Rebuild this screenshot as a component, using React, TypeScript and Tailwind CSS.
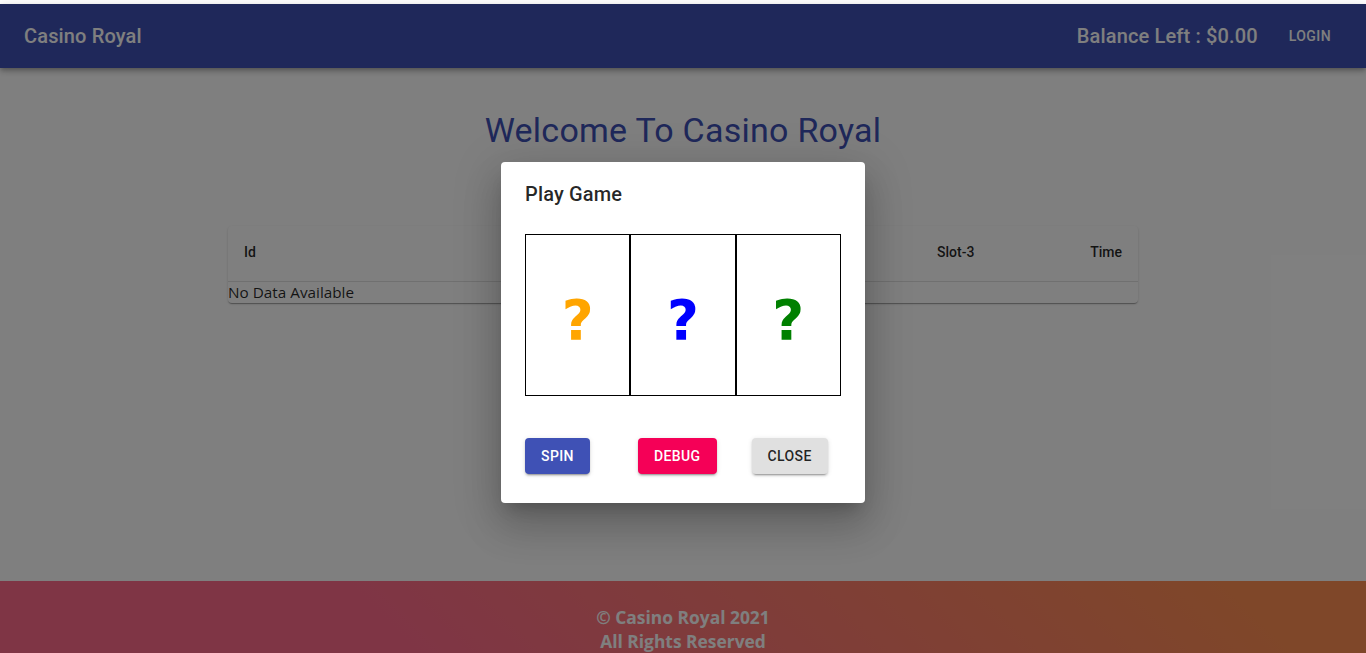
export default function App() {
  const cols = [
    { name: "Id", w: "w-[290px]" },
    { name: "Slot-1", w: "w-[201px]" },
    { name: "Slot-2", w: "w-[202px]" },
    { name: "Slot-3", w: "w-[120px]" },
  ];
  return (
    <div className="relative h-[653px] overflow-hidden bg-white font-['Roboto',sans-serif]">
      <div className="h-[4px] bg-white" />
      <header className="flex h-16 items-center bg-[#3f51b5] pl-6 pr-[27px] text-white shadow-[0_2px_4px_-1px_rgba(0,0,0,0.2),0_4px_5px_0_rgba(0,0,0,0.14),0_1px_10px_0_rgba(0,0,0,0.12)]">
        <h6 className="text-[20px] font-medium leading-8 tracking-[0.15px]">Casino Royal</h6>
        <div className="ml-auto text-[20px] font-medium leading-8 tracking-[0.15px]">Balance Left : $0.00</div>
        <button className="ml-[23px] rounded px-2 py-[6px] text-sm font-medium uppercase tracking-[0.4px]">Login</button>
      </header>

      <main className="h-[513px] pt-[41px]">
        <h4 className="text-center text-[34px] leading-[42px] tracking-[0.25px] text-[#3f51b5]">Welcome To Casino Royal</h4>
        <div className="mx-auto mt-[75px] w-[910px] rounded bg-white shadow-[0_2px_1px_-1px_rgba(0,0,0,0.2),0_1px_1px_0_rgba(0,0,0,0.14),0_1px_3px_0_rgba(0,0,0,0.12)]">
          <div className="flex h-[56px] items-center border-b border-[#e0e0e0] pb-[3px] text-sm font-medium text-black/85">
            {cols.map((c) => (
              <div key={c.name} className={`${c.w} px-4`}>
                {c.name}
              </div>
            ))}
            <div className="flex-1 px-4 text-right">Time</div>
          </div>
          <div className="font-['Open_Sans',sans-serif] text-[15.3px] leading-[21px] text-black/85">No Data Available</div>
        </div>
      </main>

      <footer className="flex h-[90px] flex-col items-center bg-[linear-gradient(45deg,#fe6b8b_30%,#ff8e53_90%)] pt-[24px] font-['Open_Sans',sans-serif] text-[17.4px] font-bold leading-6 text-white">
        <div>© Casino Royal 2021</div>
        <div>All Rights Reserved</div>
      </footer>

      <div className="absolute inset-x-0 bottom-0 top-[4px] bg-black/50" />

      <div className="absolute left-[501px] top-[162px] h-[341px] w-[364px] rounded bg-white shadow-[0_11px_15px_-7px_rgba(0,0,0,0.2),0_24px_38px_3px_rgba(0,0,0,0.14),0_9px_46px_8px_rgba(0,0,0,0.12)]">
        <h2 className="px-6 pt-4 text-[20px] font-medium leading-8 tracking-[0.15px] text-black/85">Play Game</h2>
        <div className="mx-6 mt-6 flex h-[162px] w-[316px]">
          {["text-[#ffa500]", "text-[#0000ff]", "text-[#008000]"].map((c) => (
            <div key={c} className={`flex flex-1 items-center justify-center border border-black pt-[10px] font-['DejaVu_Sans',sans-serif] text-[55px] font-bold leading-none ${c}`}>
              ?
            </div>
          ))}
        </div>
        <div className="mt-[42px] flex px-6">
          <button className="h-9 rounded bg-[#3f51b5] px-4 pb-px text-sm font-medium uppercase tracking-[0.4px] text-white shadow-[0_3px_1px_-2px_rgba(0,0,0,0.2),0_2px_2px_0_rgba(0,0,0,0.14),0_1px_5px_0_rgba(0,0,0,0.12)]">Spin</button>
          <button className="ml-[48px] h-9 rounded bg-[#f50057] px-4 pb-px text-sm font-medium uppercase tracking-[0.4px] text-white shadow-[0_3px_1px_-2px_rgba(0,0,0,0.2),0_2px_2px_0_rgba(0,0,0,0.14),0_1px_5px_0_rgba(0,0,0,0.12)]">Debug</button>
          <button className="ml-[35px] h-9 rounded bg-[#e0e0e0] px-4 pb-px text-sm font-medium uppercase tracking-[0.4px] text-black/85 shadow-[0_3px_1px_-2px_rgba(0,0,0,0.2),0_2px_2px_0_rgba(0,0,0,0.14),0_1px_5px_0_rgba(0,0,0,0.12)]">Close</button>
        </div>
      </div>
    </div>
  );
}
